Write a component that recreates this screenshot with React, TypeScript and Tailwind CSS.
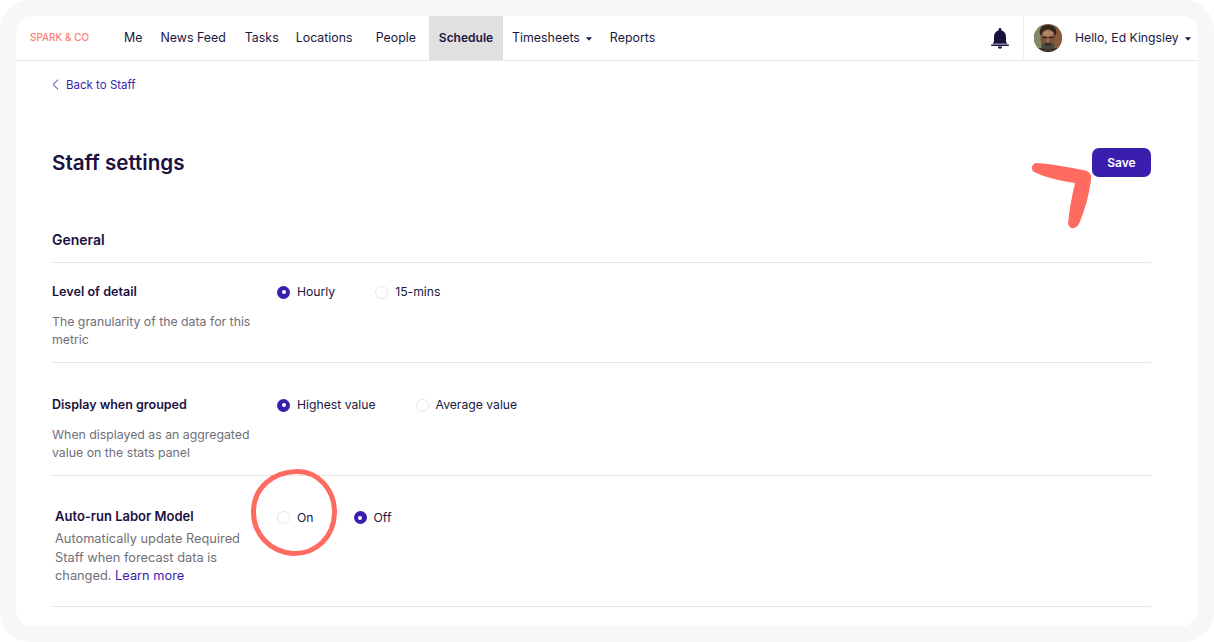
const Caret = () => (
  <svg width="6" height="4" viewBox="0 0 6 4" className="ml-[6px] mt-[2px] shrink-0">
    <path d="M0 0.3 H6 L3.4 3.3 Q3 3.700 2.600 3.300 Z" fill="#1b1740" />
  </svg>
);

const Bell = () => (
  <svg width="18" height="21" viewBox="0 0 18 21" fill="#1b1140">
    <path d="M7.600 1.500 a1.400 1.400 0 0 1 2.800 0 V2.500 C13.300 3.200 15 5.500 15 8.500 V12 C15 13.800 15.500 15 16.300 15.800 H1.700 C2.500 15 3 13.800 3 12 V8.500 C3 5.500 4.700 3.200 7.600 2.500 Z" />
    <rect x="0" y="16.500" width="18" height="1.500" rx="0.700" />
    <path d="M6.800 18.500 H11.200 A2.200 2.300 0 0 1 6.800 18.500 Z" />
  </svg>
);

const Avatar = () => (
  <svg width="28" height="28" viewBox="0 0 28 28" className="rounded-full">
    <defs>
      <filter id="soft" x="-10%" y="-10%" width="120%" height="120%">
        <feGaussianBlur stdDeviation="0.7" />
      </filter>
    </defs>
    <rect width="28" height="28" fill="#6f5a44" />
    <g filter="url(#soft)">
      <rect x="-2" y="-2" width="9" height="32" fill="#7f8a66" />
      <rect x="21" y="-2" width="9" height="32" fill="#8a5a3c" />
      <rect x="-2" y="24" width="32" height="6" fill="#3c3631" />
      <ellipse cx="14" cy="8" rx="8.500" ry="7" fill="#33251d" />
      <ellipse cx="14" cy="15" rx="7.500" ry="10" fill="#7e523a" />
      <ellipse cx="14" cy="9.500" rx="5.500" ry="3" fill="#b08568" />
      <rect x="8.500" y="13" width="4.500" height="1" fill="#2a1a14" />
      <rect x="15" y="13" width="4.500" height="1" fill="#2a1a14" />
      <rect x="13" y="14.500" width="2" height="3.500" fill="#a5785c" />
      <ellipse cx="14" cy="22" rx="6" ry="3.500" fill="#4c4440" />
      <rect x="11" y="20" width="6" height="1" fill="#261914" />
    </g>
  </svg>
);

const Radio = ({ on, label }: { on?: boolean; label: string }) => (
  <div className="flex items-center mr-[40px]">
    {on ? (
      <span className="flex h-[13px] w-[13px] items-center justify-center rounded-full bg-[#3a1fae]">
        <span className="h-[4px] w-[4px] rounded-full bg-white" />
      </span>
    ) : (
      <span className="h-[13px] w-[13px] rounded-full border border-[#e6e6ea] bg-white" />
    )}
    <span className="ml-[7px] text-[12.200px] leading-[18px] text-[#1b1740]">{label}</span>
  </div>
);

const nav = [
  { label: "Me", cls: "ml-[36px]" },
  { label: "News Feed", cls: "ml-[18px]" },
  { label: "Tasks", cls: "ml-[19px]" },
  { label: "Locations", cls: "ml-[17px]" },
  { label: "People", cls: "ml-[23px]" },
];

export default function App() {
  return (
    <div className="h-[642px] w-[1214px] overflow-hidden bg-white font-['Inter',sans-serif]">
      <div className="relative h-[642px] w-[1214px] rounded-[30px] bg-[#f7f7fa] p-4">
        <div className="h-[610px] w-[1182px] overflow-hidden rounded-2xl bg-white">
          {/* top bar */}
          <header className="flex h-[45px] items-stretch border-b border-[#e9e9ec] text-[12.400px] text-[#1b1740]">
            <div className="flex w-[72px] items-center pl-[14px] text-[9.800px] font-medium tracking-[0.1px] whitespace-nowrap text-[#fb7c72]">
              SPARK &amp; CO
            </div>
            {nav.map((n) => (
              <a key={n.label} className={`flex items-center whitespace-nowrap ${n.cls}`}>
                {n.label}
              </a>
            ))}
            <a className="ml-[13px] flex w-[74px] items-center justify-center bg-[#e0e0e0] text-xs font-semibold">
              Schedule
            </a>
            <a className="ml-[9px] flex items-center">
              Timesheets
              <Caret />
            </a>
            <a className="ml-[18px] flex items-center">Reports</a>
            <div className="ml-auto flex items-center pr-[14px]">
              <Bell />
            </div>
            <div className="flex w-[175px] items-center border-l border-[#f0f0f2] pl-[10px]">
              <Avatar />
              <span className="ml-[13px] text-[12.200px] whitespace-nowrap">Hello, Ed Kingsley</span>
              <Caret />
            </div>
          </header>

          <main className="pr-[47px] pl-9">
            <a className="flex h-[48px] items-center pt-[1px] text-[11.500px] text-[#3a1fae]">
              <svg width="7" height="11" viewBox="0 0 7 11" fill="none" className="mr-[7px] -mt-[2px]">
                <path d="M6 0.700 L1 5.500 L6 10.300" stroke="#3a1fae" strokeWidth="1" />
              </svg>
              Back to Staff
            </a>
            <div className="mt-[39px] flex items-center justify-between">
              <h1 className="text-[20.600px] leading-[26px] font-semibold text-[#1b1140]">Staff settings</h1>
              <button className="h-[29px] w-[59px] rounded-[7px] bg-[#3a1fae] text-xs font-semibold text-white">
                Save
              </button>
            </div>

            <h2 className="mt-[52px] border-b border-[#e6e6e9] pb-[12px] text-sm leading-[21px] font-semibold text-[#1b1140]">
              General
            </h2>

            <section className="flex h-[100px] border-b border-[#e6e6e9] pt-[19px]">
              <div className="w-[225px] shrink-0 text-[12.300px]">
                <div className="text-[12.600px] leading-[19px] font-semibold text-[#1b1140]">Level of detail</div>
                <p className="mt-[12px] leading-[18px] text-[#6f6f78]">
                  The granularity of the data for this metric
                </p>
              </div>
              <div className="flex h-[20px] items-center">
                <Radio on label="Hourly" />
                <Radio label="15-mins" />
              </div>
            </section>

            <section className="flex h-[113px] border-b border-[#e6e6e9] pt-[32px]">
              <div className="w-[225px] shrink-0 text-[12.300px]">
                <div className="text-[12.500px] leading-[19px] font-semibold text-[#1b1140]">Display when grouped</div>
                <p className="mt-[12px] leading-[18px] text-[#6f6f78]">
                  When displayed as an aggregated value on the stats panel
                </p>
              </div>
              <div className="flex h-[20px] items-center">
                <Radio on label="Highest value" />
                <Radio label="Average value" />
              </div>
            </section>

            <section className="flex h-[131px] border-b border-[#e6e6e9] pt-[31px]">
              <div className="w-[225px] shrink-0 pr-[22px] pl-[3px] text-[12.800px]">
                <div className="text-[13px] leading-[19px] font-semibold text-[#1b1140]">Auto-run Labor Model</div>
                <p className="mt-[4px] leading-[18.500px] text-[#6f6f78]">
                  Automatically update Required Staff when forecast data is changed.{" "}
                  <span className="text-[#3a1fae]">Learn more</span>
                </p>
              </div>
              <div className="flex h-[20px] items-center pt-[1px]">
                <Radio label="On" />
                <Radio on label="Off" />
              </div>
            </section>
          </main>
        </div>

        {/* hand drawn marks on top of the screenshot */}
        <svg className="absolute top-0 left-0" width="1214" height="642" viewBox="0 0 1214 642" fill="none">
          <path
            d="M1037 163 C1050 164 1068 167 1083 170 C1089 171 1092 174 1091 180 C1089 195 1085 210 1079 224 C1076 229 1070 230 1068 224 C1069 210 1072 196 1075 183 C1062 181 1046 178 1034 172 C1030 169 1032 163 1037 163 Z"
            fill="#ff6b60"
          />
          <path
            d="M297 471.500 C318 471 335 490 334.500 513 C334 537 316 554 293 553.500 C270 552 253 534 253.500 511 C254 488 272 472 297 471.500 Z"
            stroke="#ff6b60"
            strokeWidth="5"
          />
        </svg>
      </div>
    </div>
  );
}
